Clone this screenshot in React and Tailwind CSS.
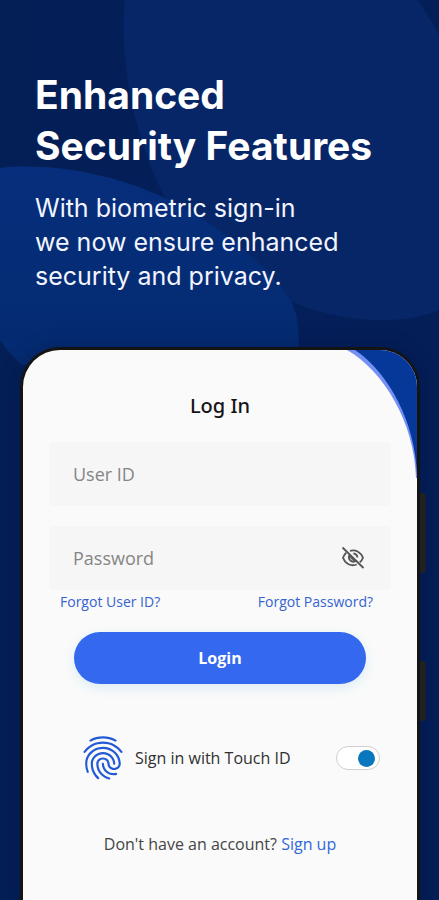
import { useState } from "react";
import { MdFingerprint } from "react-icons/md";

function Backdrop() {
  return (
    <svg
      className="absolute inset-0 h-full w-full"
      viewBox="0 0 439 900"
      preserveAspectRatio="xMidYMin slice"
      aria-hidden="true"
    >
      <defs>
        <linearGradient id="base" x1="0" y1="0" x2="1" y2="0">
          <stop offset="0" stopColor="#041f55" />
          <stop offset="0.5" stopColor="#041f5a" />
          <stop offset="1" stopColor="#041e57" />
        </linearGradient>
        <linearGradient id="leftBlob" x1="0" y1="0" x2="0" y2="1">
          <stop offset="0" stopColor="#062e7c" />
          <stop offset="1" stopColor="#042b70" />
        </linearGradient>
      </defs>
      <rect width="439" height="900" fill="url(#base)" />
      <path
        d="M126 0C121 60 134 130 163 190C200 258 290 316 380 316C402 316 423 312 439 305V40C432 26 424 13 415 0Z"
        fill="#072668"
      />
      <path
        d="M0 166C50 160 112 171 160 193C215 217 268 264 288 294C297 308 299 325 297 360H24C14 350 6 341 0 331Z"
        fill="url(#leftBlob)"
      />
    </svg>
  );
}

function ScreenCorner() {
  return (
    <svg className="absolute right-0 top-0 h-32 w-[70px]" viewBox="0 0 70 128" aria-hidden="true">
      <path d="M0 0C37 21 68 74 69 128H70V0Z" fill="#7590f5" />
      <path d="M8 0C42 23 68 72 70 124V0Z" fill="#06389a" />
    </svg>
  );
}

function EyeOffIcon() {
  return (
    <svg className="h-6 w-6" viewBox="0 0 24 24" fill="none" stroke="currentColor" strokeWidth="1.8" aria-hidden="true">
      <path d="M1.5 1.5L22.5 22" />
      <path d="M9 4.8C15 3.2 20 6.5 22 11.7C21.3 13.6 20.2 15.2 18.8 16.4" />
      <path d="M5.2 6.7C3.7 8 2.7 9.7 2 11.7C4.3 18 10 20.6 15.8 18.5" />
      <path d="M12.4 7.5C14.6 7.7 16.2 9.3 16.4 11.5" />
      <path d="M8.3 9.5C6.6 13.2 10.4 17 14.2 15.2Z" fill="currentColor" fillOpacity="0.3" />
    </svg>
  );
}

const fieldClass =
  "h-16 w-full rounded bg-[#f6f6f6] px-6 text-lg text-[#777777] outline-none placeholder:text-[#858585]";

function LoginForm() {
  const [visible, setVisible] = useState(false);
  const [touchId, setTouchId] = useState(true);

  return (
    <form
      className="relative flex flex-col px-[26px] pt-11 font-['Open_Sans',sans-serif]"
      onSubmit={(event) => event.preventDefault()}
    >
      <h2 className="text-center font-['Noto_Sans',sans-serif] text-xl leading-6 font-medium text-[#151515]">Log In</h2>

      <input className={`${fieldClass} mt-6`} type="text" placeholder="User ID" aria-label="User ID" />

      <div className="relative mt-5">
        <input
          className={fieldClass}
          type={visible ? "text" : "password"}
          placeholder="Password"
          aria-label="Password"
        />
        <button
          type="button"
          className="absolute right-[26px] top-5 text-[#555555]"
          aria-label="Toggle password visibility"
          onClick={() => setVisible(!visible)}
        >
          <EyeOffIcon />
        </button>
      </div>

      <div className="flex justify-between pl-[11px] pr-[18px] text-sm leading-6 text-[#3563cf]">
        <a href="#forgot-user">Forgot User ID?</a>
        <a href="#forgot-password">Forgot Password?</a>
      </div>

      <button
        type="submit"
        className="mx-[25px] mt-[18px] h-[52px] rounded-full bg-[#3368ef] text-base font-bold text-white shadow-[0_4px_12px_rgba(80,180,220,0.18)]"
      >
        Login
      </button>

      <div className="mt-12 flex items-center pl-7 pr-[11px]">
        <MdFingerprint className="h-[52px] w-[52px] text-[#2159d6]" aria-hidden="true" />
        <label htmlFor="touch-id" className="ml-[6px] flex-1 text-base text-[#303030]">
          Sign in with Touch ID
        </label>
        <input
          id="touch-id"
          type="checkbox"
          checked={touchId}
          onChange={() => setTouchId(!touchId)}
          className="flex h-6 w-11 appearance-none items-center rounded-full border border-[#cfcfcf] bg-white px-1 before:h-[17px] before:w-[17px] before:rounded-full before:bg-[#9a9a9a] checked:justify-end checked:before:bg-[#0877bd]"
        />
      </div>

      <p className="mt-12 pb-14 text-center text-base leading-6 text-[#444444]">
        Don't have an account?{" "}
        <a href="#sign-up" className="text-[#3167db]">
          Sign up
        </a>
      </p>
    </form>
  );
}

export default function App() {
  return (
    <main className="relative flex min-h-screen flex-col overflow-hidden bg-[#041e58]">
      <Backdrop />
      <header className="relative px-[35px] pt-[69px] font-['Inter',sans-serif] text-white">
        <h1 className="text-[39px] leading-[51px] font-bold">
          Enhanced
          <br />
          Security Features
        </h1>
        <p className="mt-5 text-[25px] leading-[34px] text-[#f2f5ff]">
          With biometric sign-in
          <br />
          we now ensure enhanced
          <br />
          security and privacy.
        </p>
      </header>

      <section className="relative mr-[19px] ml-5 mt-[54px] flex flex-1 flex-col rounded-t-[40px] bg-[#141414] px-[3px] pt-[3px] shadow-[0_0_20px_rgba(0,10,50,0.3)]">
        <span className="absolute -right-[6px] top-[146px] h-20 w-[6px] rounded-r-sm bg-[#202122]" />
        <span className="absolute -right-[6px] top-[314px] h-[60px] w-[6px] rounded-r-sm bg-[#202122]" />
        <div className="relative flex-1 overflow-hidden rounded-t-[37px] bg-[#fafafa]">
          <ScreenCorner />
          <LoginForm />
        </div>
      </section>
    </main>
  );
}
